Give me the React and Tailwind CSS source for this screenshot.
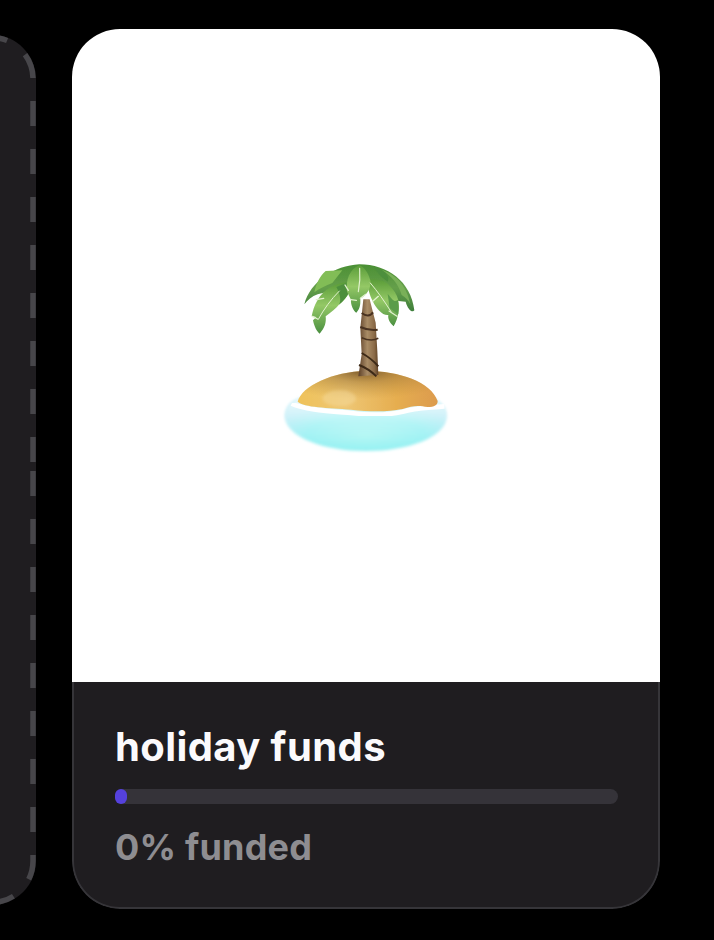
const inter = { fontFamily: '"Inter", "Liberation Sans", sans-serif' };

// Desert-island picture for the "holiday funds" goal
function IslandArt() {
  return (
    <svg width="190" height="210" viewBox="0 0 570 630" aria-hidden="true">
      <defs>
        <radialGradient id="water" cx="0.5" cy="0.7" r="0.6">
          <stop offset="0" stopColor="#a6f5f2" />
          <stop offset="0.6" stopColor="#90f0f2" />
          <stop offset="1" stopColor="#a8e6f4" />
        </radialGradient>
        <linearGradient id="waterTop" x1="0" y1="0" x2="0" y2="1">
          <stop offset="0" stopColor="#ffffff" stopOpacity="0.8" />
          <stop offset="0.5" stopColor="#ffffff" stopOpacity="0.3" />
          <stop offset="1" stopColor="#ffffff" stopOpacity="0" />
        </linearGradient>
        <linearGradient id="sand" x1="0" y1="0" x2="1" y2="0">
          <stop offset="0" stopColor="#efc25a" />
          <stop offset="0.35" stopColor="#eec673" />
          <stop offset="0.7" stopColor="#e6ae50" />
          <stop offset="1" stopColor="#dc9b4e" />
        </linearGradient>
        <radialGradient id="sandShade" cx="0.47" cy="0" r="0.7">
          <stop offset="0" stopColor="#6f4f26" stopOpacity="0.9" />
          <stop offset="0.4" stopColor="#9c7435" stopOpacity="0.5" />
          <stop offset="1" stopColor="#b98a3a" stopOpacity="0" />
        </radialGradient>
        <linearGradient id="trunk" x1="0" y1="0" x2="1" y2="0">
          <stop offset="0" stopColor="#5c3f27" />
          <stop offset="0.45" stopColor="#a98c66" />
          <stop offset="0.8" stopColor="#8a6a47" />
          <stop offset="1" stopColor="#5e4128" />
        </linearGradient>
        <linearGradient id="leafDark" x1="0" y1="0" x2="0" y2="1">
          <stop offset="0" stopColor="#4a8f34" />
          <stop offset="0.5" stopColor="#659f4a" />
          <stop offset="1" stopColor="#3f7f3c" />
        </linearGradient>
        <linearGradient id="leafLight" x1="0" y1="0" x2="0" y2="1">
          <stop offset="0" stopColor="#5a9c38" />
          <stop offset="0.45" stopColor="#94c866" />
          <stop offset="1" stopColor="#4a8f40" />
        </linearGradient>
        <filter id="soft" x="-10%" y="-10%" width="120%" height="120%">
          <feGaussianBlur stdDeviation="4" />
        </filter>
        <filter id="fine" x="-5%" y="-5%" width="110%" height="110%">
          <feGaussianBlur stdDeviation="1.2" />
        </filter>
      </defs>

      {/* water */}
      <path d="M42 495C44 468 58 450 90 440L480 440C512 452 528 472 526 498C522 560 410 600 285 600C160 600 46 560 42 495Z" fill="url(#water)" filter="url(#soft)" />
      <path d="M42 495C44 468 58 450 90 440L480 440C512 452 528 472 526 498C522 560 410 600 285 600C160 600 46 560 42 495Z" fill="url(#waterTop)" filter="url(#soft)" />

      {/* foam line */}
      <path d="M62 458C100 476 170 480 240 486C290 492 345 494 395 482C430 472 455 472 520 466" fill="none" stroke="#ffffff" strokeWidth="14" filter="url(#fine)" />

      {/* sand */}
      <g filter="url(#fine)">
        <path d="M80 452C92 405 185 362 285 360C385 360 480 392 500 450C500 462 490 468 470 468C440 462 425 464 395 474C345 484 295 482 240 476C170 470 100 470 80 452Z" fill="url(#sand)" />
        <path d="M80 452C92 405 185 362 285 360C385 360 480 392 500 450C500 462 490 468 470 468C440 462 425 464 395 474C345 484 295 482 240 476C170 470 100 470 80 452Z" fill="url(#sandShade)" />
      </g>
      <ellipse cx="205" cy="442" rx="50" ry="24" fill="#f6dfa6" opacity="0.4" filter="url(#soft)" />

      {/* fronds behind the trunk */}
      <g filter="url(#fine)">
        <path d="M100 160C118 92 190 44 265 40C350 40 420 92 430 178C424 186 410 176 404 152L382 150L300 110L220 110L140 130C122 136 110 148 100 160Z" fill="url(#leafDark)" />
        <path d="M164 60C146 76 136 96 130 124C146 112 164 104 184 96L214 58Z" fill="#82bd56" />
        <path d="M330 56C362 74 382 98 392 132C402 138 412 146 418 160C410 112 380 70 330 56Z" fill="#79b058" />
        <path d="M310 50C320 66 330 78 350 92C358 74 336 52 310 50Z" fill="#4d8f3c" />
      </g>

      {/* trunk */}
      <g filter="url(#fine)">
        <path d="M277 145L296 145L314 215L319 300L322 372L262 376L272 310L268 230Z" fill="url(#trunk)" />
        <path d="M272 186C285 196 298 196 306 184" fill="none" stroke="#4a3320" strokeWidth="6" />
        <path d="M268 228C285 236 305 238 320 236" fill="none" stroke="#4a3320" strokeWidth="6" />
        <path d="M272 260C290 268 310 268 322 262" fill="none" stroke="#4a3320" strokeWidth="5" />
        <path d="M272 306C290 316 310 332 322 346" fill="none" stroke="#3c2918" strokeWidth="6" />
        <path d="M264 342C285 350 302 362 316 376" fill="none" stroke="#3c2918" strokeWidth="6" />
      </g>

      {/* fronds in front of the trunk */}
      <g filter="url(#fine)">
        <path d="M226 94C176 100 136 128 122 196L136 198L126 208C130 228 138 242 146 248C162 230 166 214 164 196C180 184 196 172 205 160C218 150 228 138 234 124Z" fill="url(#leafLight)" />
        <path d="M196 108C206 126 212 146 204 161C216 152 228 138 234 124L226 96Z" fill="#4e8f3e" />
        <path d="M292 86C316 84 342 88 352 100C368 116 378 130 382 148C386 172 382 204 368 226C354 214 350 200 352 192C334 194 316 172 306 152C296 132 288 110 292 86Z" fill="url(#leafLight)" />
        <path d="M350 128C364 146 372 156 380 146C386 170 382 180 382 190L356 172Z" fill="#5a9c48" />
        <path d="M265 42C236 56 224 84 228 122L240 146C238 160 248 180 256 185C270 170 268 156 268 142C286 136 302 110 298 88C292 66 280 48 265 42Z" fill="url(#leafLight)" />
      </g>

      {/* leaf veins */}
      <g fill="none" stroke="#e3f2cf" strokeLinecap="round" filter="url(#fine)">
        <path d="M266 52C268 78 266 100 262 122" strokeWidth="3.5" />
        <path d="M222 102L232 118" strokeWidth="4" />
        <path d="M205 120C180 145 158 175 142 205" strokeWidth="3" />
        <path d="M298 96C320 122 340 150 360 182" strokeWidth="3" />
        <path d="M136 146L158 142" strokeWidth="4" />
        <path d="M124 196L140 204" strokeWidth="4" />
        <path d="M354 180L378 196" strokeWidth="3.5" />
        <path d="M306 150L322 136" strokeWidth="4" />
        <path d="M240 146L256 148" strokeWidth="4" />
        <path d="M268 142L284 130" strokeWidth="3.5" />
      </g>
    </svg>
  );
}

// Neighbouring card, mostly off-screen, with a dashed edge drawn as two strokes
function PeekCard() {
  return (
    <div className="relative mt-[6px] -ml-[264px] h-[870px] w-[300px] shrink-0 rounded-[44px] bg-[#1f1d20]">
      <svg className="absolute top-0 left-[264px]" width="36" height="870" viewBox="0 0 36 870" aria-hidden="true">
        <g fill="none" stroke="#47464a" strokeWidth="5.5">
          <path d="M-8.5 2.5A41.5 41.5 0 0 1 33 44V435" strokeDasharray="25 23" strokeDashoffset="9" />
          <path d="M33 436V826A41.5 41.5 0 0 1 -8.5 867.5" strokeDasharray="25 23" />
        </g>
      </svg>
    </div>
  );
}

export default function App() {
  return (
    <div className="flex h-[940px] w-[714px] items-start gap-[36px] overflow-hidden bg-black pt-[29px]" style={inter}>
      <PeekCard />
      <div className="flex h-[880px] w-[588px] shrink-0 flex-col overflow-hidden rounded-[48px]">
        <div className="flex h-[653px] items-center justify-center bg-white">
          <IslandArt />
        </div>
        <div className="flex flex-1 flex-col rounded-b-[48px] border-x-2 border-b-2 border-[#363539] bg-[#1f1d20] pt-[42px] pr-[40px] pl-[41px]">
          <h2 className="text-[40px] leading-[46px] font-bold tracking-[0.4px] text-[#fbfafc]">holiday funds</h2>
          <div className="mt-[19px] h-[15px] rounded-full bg-[#353339]">
            <div className="h-[15px] w-[12px] rounded-full bg-[#5541dd]" />
          </div>
          <p className="mt-[21px] text-[36px] leading-[44px] font-bold tracking-[0.2px] text-[#8e8d91]">0% funded</p>
        </div>
      </div>
    </div>
  );
}
